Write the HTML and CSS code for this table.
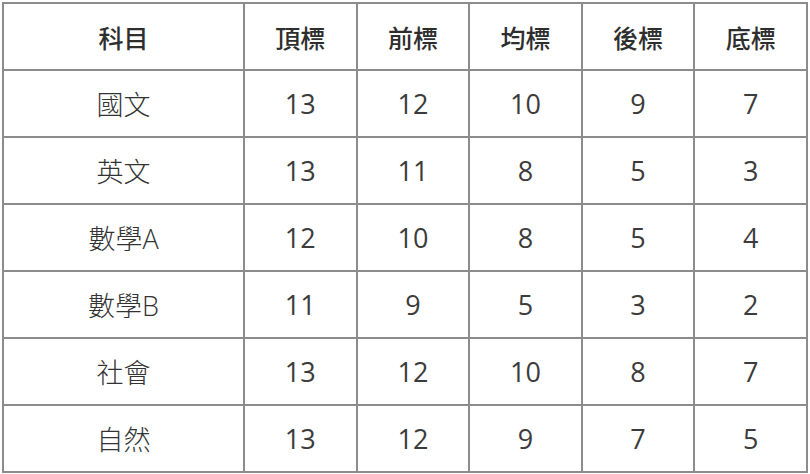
FILE: index.html
```html
<!DOCTYPE html>
<html lang="zh-Hant">
<head>
<meta charset="utf-8">
<link rel="stylesheet" href="styles.css">
</head>
<body>
<table class="scores">
  <thead>
    <tr><th class="subj">科目</th><th>頂標</th><th>前標</th><th>均標</th><th>後標</th><th>底標</th></tr>
  </thead>
  <tbody>
    <tr><td class="name">國文</td><td>13</td><td>12</td><td>10</td><td>9</td><td>7</td></tr>
    <tr><td class="name">英文</td><td>13</td><td>11</td><td>8</td><td>5</td><td>3</td></tr>
    <tr><td class="name">數學A</td><td>12</td><td>10</td><td>8</td><td>5</td><td>4</td></tr>
    <tr><td class="name">數學B</td><td>11</td><td>9</td><td>5</td><td>3</td><td>2</td></tr>
    <tr><td class="name">社會</td><td>13</td><td>12</td><td>10</td><td>8</td><td>7</td></tr>
    <tr><td class="name">自然</td><td>13</td><td>12</td><td>9</td><td>7</td><td>5</td></tr>
  </tbody>
</table>
</body>
</html>
```
FILE: styles.css
```css
html, body {
  margin: 0;
  padding: 0;
  background: #ffffff;
}
body {
  padding: 2px 1px 0 2px;
  font-family: "Open Sans", "Noto Sans CJK TC", "Noto Sans", sans-serif;
}
.scores {
  border-collapse: collapse;
  width: 806px;
  table-layout: fixed;
}
.scores th, .scores td {
  border: 2px solid #8c8c8c;
  text-align: center;
  vertical-align: middle;
  height: 65px;
  padding: 0;
}
.scores th {
  font-size: 25px;
  font-weight: 500;
  color: #2e2e2e;
  font-family: "Noto Sans CJK TC", sans-serif;
}
.scores th.subj {
  width: 239px;
}
.scores td {
  font-size: 27px;
  font-weight: 400;
  color: #3c3c3c;
}
.scores td.name {
  font-weight: 300;
  color: #333333;
}
```
